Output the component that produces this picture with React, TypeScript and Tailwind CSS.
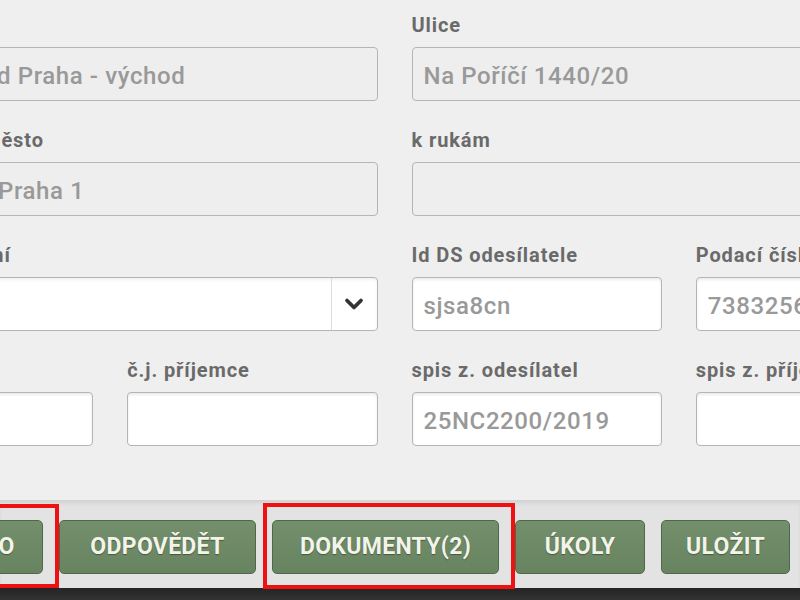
import { ChevronDown } from "lucide-react";

const font = { fontFamily: "Roboto, 'Liberation Sans', sans-serif" };

function Label({ children, className }: { children: React.ReactNode; className?: string }) {
  return (
    <div
      className={
        "h-[24px] mb-[10px] text-[20px] leading-[24px] font-bold tracking-[0.9px] text-[#6a6a6a] whitespace-nowrap " +
        (className ?? "")
      }
    >
      {children}
    </div>
  );
}

function Field({
  label,
  value,
  disabled,
  className,
  labelClass,
  inputClass,
}: {
  label: string;
  value?: string;
  disabled?: boolean;
  className?: string;
  labelClass?: string;
  inputClass?: string;
}) {
  return (
    <div className={className}>
      <Label className={labelClass}>{label}</Label>
      <div
        className={
          "h-[54px] rounded-[4px] border border-[#b5b5b5] pr-[11px] pt-[4px] flex items-center text-[24px] font-medium tracking-[0.6px] text-[#999999] whitespace-nowrap overflow-hidden " +
          (disabled ? "bg-[#eeeeee] " : "bg-white shadow-[inset_0_2px_3px_rgba(0,0,0,0.08)] ") +
          (inputClass ?? "pl-[11px]")
        }
      >
        {value}
      </div>
    </div>
  );
}

function SelectField({ label, className }: { label: string; className?: string }) {
  return (
    <div className={className}>
      <Label className="ml-[3px]">{label}</Label>
      <div className="h-[54px] rounded-[4px] border border-[#b5b5b5] bg-white flex shadow-[inset_0_2px_3px_rgba(0,0,0,0.06)]">
        <div className="flex-1" />
        <div className="w-[46px] border-l border-[#dcdcdc] flex items-center justify-center text-[#333333]">
          <ChevronDown className="w-[28px] h-[28px]" strokeWidth={3.2} />
        </div>
      </div>
    </div>
  );
}

const buttons = [
  { label: "HOTOVO", w: "w-[150px]" },
  { label: "ODPOVĚDĚT", w: "w-[197px]" },
  { label: "DOKUMENTY(2)", w: "w-[227px]" },
  { label: "ÚKOLY", w: "w-[130px]" },
  { label: "ULOŽIT", w: "w-[129px]" },
  { label: "ZAVŘÍT", w: "w-[130px]" },
];

export default function App() {
  return (
    <div className="relative w-[800px] h-[600px] overflow-hidden bg-[#efefef]" style={font}>
      <div className="h-[500px] pt-[13px]">
        <div className="ml-[-157px] w-[1103px] grid grid-cols-4 gap-x-[34px] gap-y-[27px]">
          <Field
            className="col-span-2"
            label="Soud"
            value="Okresní soud Praha - východ"
            disabled
            inputClass="pl-[19px]"
          />
          <Field className="col-span-2" label="Ulice" value="Na Poříčí 1440/20" disabled />

          <div className="col-span-2 flex gap-[34px]">
            <Field className="w-[109px]" label="PSČ" value="11000" disabled />
            <Field className="flex-1" label="Město" value="Praha 1" disabled labelClass="ml-[-3px]" />
          </div>
          <Field className="col-span-2" label="k rukám" disabled />

          <SelectField className="col-span-2" label="Způsob doručení" />
          <Field label="Id DS odesílatele" value="sjsa8cn" />
          <Field label="Podací číslo" value="738325671" />

          <Field label="č.j. odesílatele" />
          <Field label="č.j. příjemce" />
          <Field label="spis z. odesílatel" value="25NC2200/2019" />
          <Field label="spis z. příjemce" />
        </div>
      </div>

      <div className="h-[88px] bg-[#e3e3e3] shadow-[inset_0_4px_5px_-2px_rgba(0,0,0,0.1)] pt-[20px]">
        <div className="ml-[-107px] flex gap-[16px]">
          {buttons.map((b) => (
            <button
              key={b.label}
              className={
                b.w +
                " shrink-0 h-[54px] rounded-[5px] border border-[#4f6849] bg-gradient-to-b from-[#738f6b] to-[#67835f] text-[#f2f4ea] text-[23px] font-bold tracking-[0.3px] [text-shadow:0_1px_1px_rgba(0,0,0,0.35)]"
              }
            >
              {b.label}
            </button>
          ))}
        </div>
      </div>
      <div className="h-[12px] bg-gradient-to-b from-[#242424] to-[#333333]" />

      <div className="absolute left-[-20px] top-[504px] w-[79px] h-[84px] border-[4px] border-[#ee1111]" />
      <div className="absolute left-[263px] top-[503px] w-[252px] h-[86px] border-[4px] border-[#ee1111]" />
    </div>
  );
}
